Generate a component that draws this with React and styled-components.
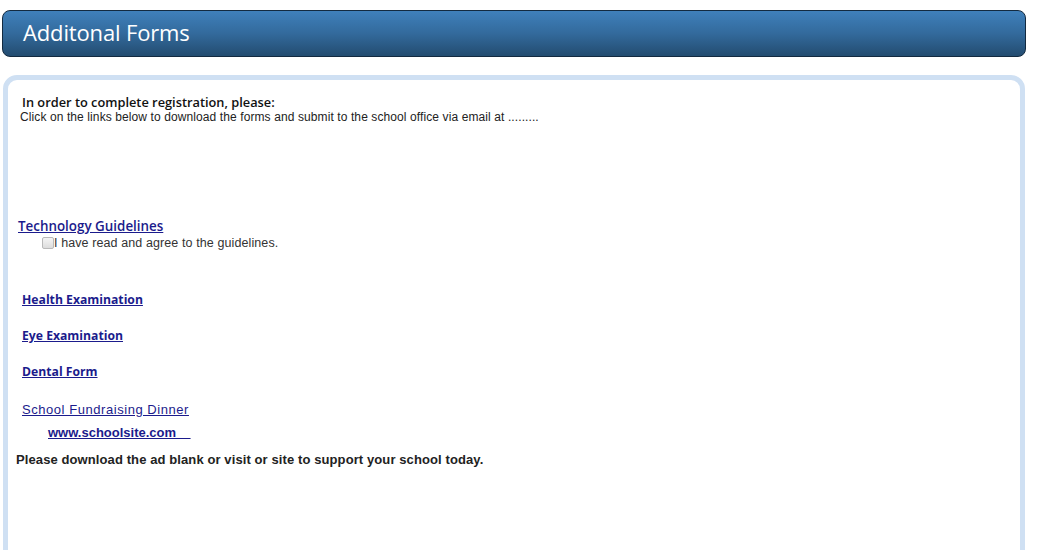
import React from 'react';
import styled, { createGlobalStyle } from 'styled-components';

const GlobalStyle = createGlobalStyle`
  body {
    margin: 0;
    background: #ffffff;
    font-family: 'Liberation Sans', Arial, sans-serif;
  }
`;

const Page = styled.div`
  width: 1037px;
  height: 550px;
  overflow: hidden;
  padding-top: 10px;
  box-sizing: border-box;
`;

const Header = styled.header`
  margin-left: 2px;
  width: 1024px;
  height: 47px;
  box-sizing: border-box;
  border: 1px solid #132a40;
  border-radius: 8px;
  background: linear-gradient(to bottom, #3f80bb 0%, #336a9c 50%, #234c70 100%);
  display: flex;
  align-items: center;
  padding: 0 0 4px 20px;
`;

const HeaderTitle = styled.h1`
  margin: 0;
  color: #ffffff;
  font-family: 'Open Sans', sans-serif;
  font-weight: 500;
  font-size: 22px;
  letter-spacing: -0.15px;
`;

const Panel = styled.section`
  margin: 18px 0 0 3px;
  width: 1022px;
  min-height: 520px;
  box-sizing: border-box;
  border: 5px solid #cfe0f3;
  border-radius: 14px;
  padding: 14px 0 0 14px;
`;

const Intro = styled.p`
  margin: 0;
  font-family: 'Open Sans', sans-serif;
  font-weight: 600;
  font-size: 12.8px;
  line-height: 16px;
  color: #111;
`;

const Instructions = styled.p`
  margin: 0 0 0 -2px;
  font-size: 12px;
  line-height: 14px;
  color: #222;
  letter-spacing: 0.1px;
`;

const FormLink = styled.a`
  display: block;
  width: max-content;
  margin-top: ${(p) => p.$gap}px;
  margin-left: ${(p) => p.$indent}px;
  color: #1b1b8c;
  text-decoration: underline;
  font-family: ${(p) => (p.$plain ? "'Liberation Sans', Arial, sans-serif" : "'Open Sans', sans-serif")};
  font-weight: ${(p) => p.$weight || 400};
  font-size: ${(p) => p.$size}px;
  letter-spacing: ${(p) => p.$spacing || 0}px;
  line-height: 18px;
  white-space: pre;
`;

const AgreeRow = styled.label`
  display: flex;
  align-items: center;
  margin-left: 20px;
  height: 16px;
  font-size: 12.5px;
  letter-spacing: 0.1px;
  color: #333;
`;

const Check = styled.input`
  appearance: none;
  margin: 0;
  width: 12px;
  height: 12px;
  box-sizing: border-box;
  border: 1px solid #b9b9b9;
  border-radius: 2px;
  background: linear-gradient(to bottom, #f4f4f4, #dcdcdc);
`;

const Note = styled.p`
  margin: 9px 0 0 -6px;
  font-size: 13px;
  font-weight: 700;
  letter-spacing: 0.1px;
  line-height: 18px;
  color: #222;
`;

const App = () => {
  return (
    <Page>
      <GlobalStyle />
      <Header>
        <HeaderTitle>Additonal Forms</HeaderTitle>
      </Header>
      <Panel>
        <Intro>In order to complete registration, please:</Intro>
        <Instructions>
          Click on the links below to download the forms and submit to the school office via email at .........
        </Instructions>
        <FormLink href="#" $gap={93} $indent={-4} $size={13.4} $weight={600}>
          Technology Guidelines
        </FormLink>
        <AgreeRow>
          <Check type="checkbox" />
          I have read and agree to the guidelines.
        </AgreeRow>
        <FormLink href="#" $gap={40} $indent={0} $size={12.2} $weight={700}>
          Health Examination
        </FormLink>
        <FormLink href="#" $gap={18} $indent={0} $size={12.2} $weight={700}>
          Eye Examination
        </FormLink>
        <FormLink href="#" $gap={18} $indent={0} $size={12.2} $weight={700}>
          Dental Form
        </FormLink>
        <FormLink href="#" $gap={20} $indent={0} $size={13} $spacing={0.55} $plain>
          School Fundraising Dinner
        </FormLink>
        <FormLink href="#" $gap={5} $indent={26} $size={13} $weight={700} $plain>
          {'www.schoolsite.com    '}
        </FormLink>
        <Note>Please download the ad blank or visit or site to support your school today.</Note>
      </Panel>
    </Page>
  );
};

export default App;
